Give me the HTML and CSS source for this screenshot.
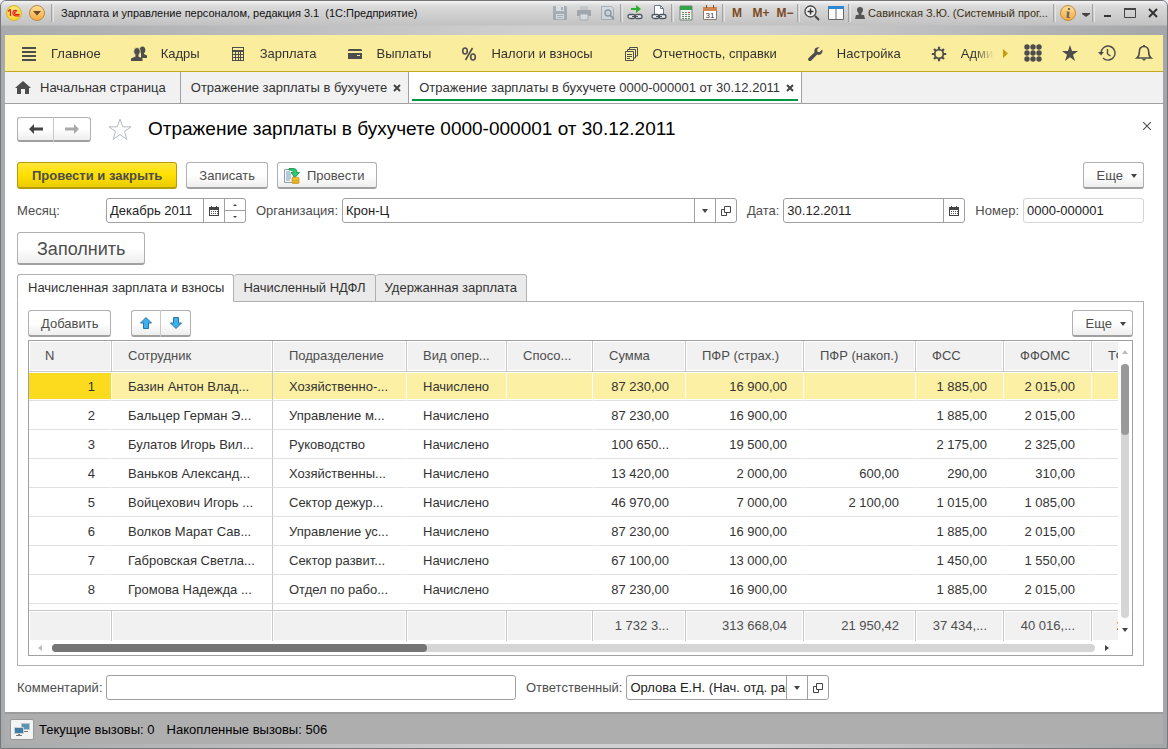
FILE: index.html
```html
<!DOCTYPE html>
<html lang="ru">
<head>
    <meta charset="UTF-8">
    <meta name="viewport" content="width=device-width, initial-scale=1.0">
    <title>Зарплата и управление персоналом</title>
    <link rel="stylesheet" href="styles.css">
</head>
<body>
    <!-- Shared icons -->
    <svg class="sprite" aria-hidden="true">
        <symbol id="i-calendar" viewBox="0 0 10 10">
            <path d="M0 1h10v9H0z" fill="#444"/>
            <path d="M1 4h8v5H1z" fill="#fff"/>
            <path d="M2 0h1v2H2zM7 0h1v2H7z" fill="#444"/>
            <path d="M2 5h1v1H2zM4 5h1v1H4zM6 5h1v1H6zM2 7h1v1H2zM4 7h1v1H4zM6 7h1v1H6zM8 5h1v1H8zM8 7h1v1H8z" fill="#555"/>
        </symbol>
        <symbol id="i-open" viewBox="0 0 10 10">
            <path d="M3.500 .5h6v6h-6zM3 3.500H.5v6h5V7" fill="none" stroke="#444"/>
        </symbol>
        <symbol id="i-down" viewBox="0 0 6 4"><path d="M0 0h6L3 4z" fill="#444"/></symbol>
        <symbol id="i-close" viewBox="0 0 8 8"><path d="M1 1l6 6M7 1L1 7" stroke="#444" stroke-width="2"/></symbol>
    </svg>

    <div class="window">
        <header class="titlebar">
            <svg class="logo" viewBox="0 0 16 16">
                <defs>
                    <radialGradient id="g-logo" cx=".5" cy=".4" r=".6"><stop offset="0" stop-color="#fff7a0"/><stop offset="1" stop-color="#f8cf1c"/></radialGradient>
                    <linearGradient id="g-orange" x2="0" y2="1"><stop offset="0" stop-color="#ffdf9c"/><stop offset="1" stop-color="#f6a93a"/></linearGradient>
                </defs>
                <circle cx="8" cy="8" r="7.500" fill="url(#g-logo)" stroke="#d8b43c"/>
                <path d="M2 6.500L3.700 5h.8v6M11 6.300C10 4.800 6.800 5 6.800 8s2.500 3.200 6.700 2.800M10.200 7.200c-1-.7-1.700-.1-1.700.8s.6 1.300 1.500 1.300h3.500" fill="none" stroke="#e3201b" stroke-width="1.300"/>
            </svg>
            <button class="main-menu" aria-label="Меню">
                <svg viewBox="0 0 16 16"><circle cx="8" cy="8" r="7.500" fill="url(#g-orange)" stroke="#b98a45"/><path d="M4 6h8l-4 4.500z" fill="#6b4a2a"/></svg>
            </button>
            <span class="sep"></span>
            <span class="caption">Зарплата и управление персоналом, редакция 3.1&nbsp; (1С:Предприятие)</span>

            <div class="tools">
                <button class="tool disabled" aria-label="Сохранить"><svg viewBox="0 0 16 16"><path d="M1 1h13l1 1v13H1z" fill="#8796a3"/><path d="M4 1h8v5H4zM4 9h8v5H4z" fill="#dfe3e6"/><path d="M5 10h6v1H5zM5 12h6v1H5zM9 2h2v3H9z" fill="#8796a3"/></svg></button>
                <button class="tool disabled" aria-label="Печать"><svg viewBox="0 0 16 16"><path d="M4 1h8v5H4z" fill="#b5bcc2"/><path d="M1 5h14v6H1z" fill="#7f8a93"/><path d="M4 9h8v6H4z" fill="#dfe3e6" stroke="#8796a3"/></svg></button>
                <button class="tool disabled" aria-label="Просмотр"><svg viewBox="0 0 16 16"><path d="M1.500 1.500h10l2 2v11h-12z" fill="#d7dce0" stroke="#8796a3"/><circle cx="8" cy="8" r="3" fill="#c2d3df" stroke="#637787" stroke-width="1.500"/><path d="M10 10l4 4" stroke="#637787" stroke-width="2"/></svg></button>
                <span class="sep"></span>
                <button class="tool" aria-label="Получить ссылку"><svg viewBox="0 0 16 16"><path d="M4 3h5V0l5 4-5 4V5H4z" fill="#2fae2f"/><rect x="1" y="9.500" width="7" height="4" rx="2" fill="#eee" stroke="#4d5660" stroke-width="1.300"/><rect x="8" y="9.500" width="7" height="4" rx="2" fill="#eee" stroke="#4d5660" stroke-width="1.300"/><path d="M5 11.500h6" stroke="#4d5660"/></svg></button>
                <button class="tool" aria-label="Перейти по ссылке"><svg viewBox="0 0 16 16"><path d="M3.500 9V.5h6l3 3V9" fill="#fff" stroke="#6c7c8c"/><path d="M9.500.5v3h3" fill="none" stroke="#6c7c8c"/><rect x="1" y="9.500" width="7" height="4" rx="2" fill="#eee" stroke="#4d5660" stroke-width="1.300"/><rect x="8" y="9.500" width="7" height="4" rx="2" fill="#eee" stroke="#4d5660" stroke-width="1.300"/><path d="M5 11.500h6" stroke="#4d5660"/></svg></button>
                <span class="sep"></span>
                <button class="tool" aria-label="Калькулятор"><svg viewBox="0 0 16 16"><path d="M2 1h12v14H2z" fill="#f4f4f4" stroke="#6d8574"/><path d="M2 1h12v4H2z" fill="#37a24b"/><path d="M4 7h2v1H4zM7 7h2v1H7zM4 9h2v1H4zM7 9h2v1H7zM4 11h2v1H4zM7 11h2v1H7zM4 13h2v1H4zM7 13h2v1H7zM10 9h2v1h-2zM10 11h2v1h-2zM10 13h2v1h-2z" fill="#5f8a68"/><path d="M10 7h2v1h-2z" fill="#d33"/></svg></button>
                <button class="tool" aria-label="Календарь"><svg viewBox="0 0 16 16"><path d="M1.500 2.500h13v12h-13z" fill="#fff" stroke="#8a7a70"/><path d="M1 2h14v4H1z" fill="#d0864c"/><path d="M4 0h1v3H4zM11 0h1v3h-1z" fill="#7a4f2d"/><text x="8" y="13" class="cal-day">31</text></svg></button>
                <span class="sep"></span>
                <button class="tool mem">M</button>
                <button class="tool mem">M+</button>
                <button class="tool mem">M−</button>
                <span class="sep"></span>
                <button class="tool" aria-label="Масштаб"><svg viewBox="0 0 16 16"><circle cx="6.500" cy="6.500" r="5.500" fill="#f2f2f2" stroke="#444" stroke-width="1.300"/><path d="M3.500 6.500h6M6.500 3.500v6" stroke="#333" stroke-width="1.500"/><path d="M11 11l4 4" stroke="#444" stroke-width="2"/></svg></button>
                <button class="tool" aria-label="Панели"><svg viewBox="0 0 16 16"><path d="M.5 1.500h15v13H.5z" fill="#fff" stroke="#666"/><path d="M0 1h16v3H0z" fill="#2f86d2"/><path d="M8 4v11" stroke="#666"/></svg></button>
                <span class="sep"></span>
                <button class="user"><svg viewBox="0 0 10 12"><circle cx="5" cy="3" r="3" fill="#555"/><path d="M3.500 5h3v3H9l1 4H0l1-4h2.500z" fill="#555"/></svg>Савинская З.Ю. (Системный прог...</button>
                <span class="sep"></span>
                <button class="tool" aria-label="О программе"><svg viewBox="0 0 16 16"><circle cx="8" cy="8" r="7.500" fill="url(#g-orange)" stroke="#c28d3d"/><path d="M8 3h2v2H8zM6.500 6.500h3L9 12h1v1H6.500l.5-5.500h-.8z" fill="#6a6a6a"/></svg></button>
                <button class="tool narrow" aria-label="Еще"><svg viewBox="0 0 16 16"><path d="M4 8h8v1l-4 3-4-3z" fill="#444"/></svg></button>
                <span class="sep"></span>
                <button class="tool win" aria-label="Свернуть"><svg viewBox="0 0 16 16"><path d="M5 10h7v2H5z" fill="#333"/></svg></button>
                <button class="tool win" aria-label="Развернуть"><svg viewBox="0 0 16 16"><path d="M2.500 3.500h11v9h-11z" fill="none" stroke="#444"/><path d="M2 3h12v2H2z" fill="#444"/></svg></button>
                <button class="tool win" aria-label="Закрыть"><svg viewBox="0 0 16 16"><path d="M4 4l8 8M12 4l-8 8" stroke="#333" stroke-width="2"/></svg></button>
            </div>
        </header>

        <div class="app">
            <nav class="sections">
                <div class="section-list">
                    <a href="#"><svg viewBox="0 0 16 16"><path d="M1 1h14v2H1zM1 5h14v2H1zM1 9h14v2H1zM1 13h14v2H1z"/></svg>Главное</a>
                    <a href="#"><svg viewBox="0 0 16 16"><ellipse cx="11.500" cy="4" rx="2.800" ry="3.500"/><path d="M10 6h3v2l3 1.500V12h-6z"/><ellipse cx="6" cy="5.500" rx="3.300" ry="4" stroke="#fbed9e" stroke-width=".8"/><path d="M4.500 8.500h3v2l4 2V15H0v-2.500l4.500-2z"/></svg>Кадры</a>
                    <a href="#"><svg viewBox="0 0 16 16"><path fill-rule="evenodd" d="M2 1h12v14H2zM3 2v2h10V2zM3 6v2h2V6zM6 6v2h2V6zM9 6v2h1V6zM11 6v2h2V6zM3 9v2h2V9zM6 9v2h2V9zM9 9v2h1V9zM11 9v2h2V9zM3 12v2h2v-2zM6 12v2h2v-2zM9 12v2h1v-2zM11 12v2h2v-2z"/></svg>Зарплата</a>
                    <a href="#"><svg viewBox="0 0 16 16"><path fill-rule="evenodd" d="M2 3h12l1 1v1H1V4zM1 7h14v6H1zM10 9v1h3V9z"/></svg>Выплаты</a>
                    <a href="#"><svg viewBox="0 0 16 16"><g fill="none" stroke="#4d4d4d" stroke-width="1.600"><ellipse cx="4" cy="5" rx="2.300" ry="3"/><ellipse cx="12" cy="11" rx="2.300" ry="3"/><path d="M11.500 2l-7 12"/></g></svg>Налоги и взносы</a>
                    <a href="#"><svg viewBox="0 0 16 16"><path d="M2.500 5.500h8v9h-8zM4.500 5V3.500h8V12H11M6.500 3V1.500h8V10H13M4 8.500h5M4 10.500h5M4 12.500h3" fill="none" stroke="#4d4d4d"/></svg>Отчетность, справки</a>
                    <a href="#"><svg viewBox="0 0 16 16"><path d="M12.500 1.300L10 3.800l.5 2 2 .5 2.700-2.700c.8 2-.1 4.200-1.700 4.900-1.200.6-2.300.5-3.300.1L4.300 14.500c-.8.8-2 .8-2.700.1s-.8-1.900 0-2.700L7.600 6.200c-.7-2.300.2-5.500 4.900-4.900z"/></svg>Настройка</a>
                    <a href="#"><svg viewBox="0 0 16 16"><circle cx="8" cy="8" r="4.300" fill="none" stroke="#4d4d4d" stroke-width="1.800"/><path d="M8 .8v3M8 12.200v3M.8 8h3M12.200 8h3M3 3l2 2M11 11l2 2M3 13l2-2M11 5l2-2" stroke="#4d4d4d" stroke-width="2.200"/></svg>Администрирование</a>
                </div>
                <button class="more-sections" aria-label="Далее"><svg viewBox="0 0 5 9"><path d="M0 0l5 4.500L0 9z" fill="#c79b10"/></svg></button>
                <div class="nav-tools">
                    <button aria-label="Все функции"><svg viewBox="0 0 18 18"><g fill="#4d4d4d"><circle cx="3" cy="3" r="2.700"/><circle cx="9" cy="3" r="2.700"/><circle cx="15" cy="3" r="2.700"/><circle cx="3" cy="9" r="2.700"/><circle cx="9" cy="9" r="2.700"/><circle cx="15" cy="9" r="2.700"/><circle cx="3" cy="15" r="2.700"/><circle cx="9" cy="15" r="2.700"/><circle cx="15" cy="15" r="2.700"/></g></svg></button>
                    <button aria-label="Избранное"><svg viewBox="0 0 18 18"><path d="M9 1l2 6h6l-5 3.700 2 6.300-5-3.800L4 17l2-6.300L1 7h6z" fill="#4d4d4d"/></svg></button>
                    <button aria-label="История"><svg viewBox="0 0 18 18"><path d="M3 9.500a7 7 0 1 1 2 4.500" fill="none" stroke="#4d4d4d" stroke-width="1.400"/><path d="M0 8h6l-3 3.500z" fill="#4d4d4d"/><path d="M9.500 5v5l3 2" fill="none" stroke="#4d4d4d" stroke-width="1.400"/></svg></button>
                    <button aria-label="Уведомления"><svg viewBox="0 0 18 18"><path d="M2 14h14c-2-1.500-2.300-3-2.300-6 0-3.500-1.700-5.500-4.700-5.500S4.300 4.500 4.300 8c0 3-.3 4.500-2.300 6z" fill="none" stroke="#4d4d4d" stroke-width="1.600"/><path d="M8 1h2v2H8zM7 15h4l-2 2z" fill="#4d4d4d"/></svg></button>
                </div>
            </nav>

            <div class="open-tabs">
                <a href="#" class="open-tab home"><svg viewBox="0 0 16 16"><path d="M8 1l8 7h-2v6h-4v-5H6v5H2V8H0z" fill="#4d4d4d"/></svg>Начальная страница</a>
                <a href="#" class="open-tab">Отражение зарплаты в бухучете<svg class="x"><use href="#i-close"/></svg></a>
                <a href="#" class="open-tab current">Отражение зарплаты в бухучете 0000-000001 от 30.12.2011<svg class="x"><use href="#i-close"/></svg></a>
            </div>

            <main class="form">
                <div class="heading">
                    <div class="btn-group">
                        <button class="btn" aria-label="Назад"><svg class="arrow" viewBox="0 0 14 10"><path d="M0 5l5-5v3.500h9v3H5V10z" fill="#444"/></svg></button>
                        <button class="btn" aria-label="Вперед"><svg class="arrow" viewBox="0 0 14 10"><path d="M14 5L9 0v3.500H0v3h9V10z" fill="#aaa"/></svg></button>
                    </div>
                    <svg class="favorite" viewBox="0 0 24 22"><path d="M12 1l2.700 7.800H23l-6.600 4.800 2.500 7.700L12 16.500l-6.900 4.800 2.500-7.700L1 8.800h8.300z" fill="none" stroke="#b3b8c0"/></svg>
                    <h1>Отражение зарплаты в бухучете 0000-000001 от 30.12.2011</h1>
                    <button class="close-form" aria-label="Закрыть"><svg viewBox="0 0 8 8"><path d="M0 0l8 8M8 0L0 8" stroke="#555" stroke-width="1.200"/></svg></button>
                </div>

                <div class="commands">
                    <button class="btn primary">Провести и закрыть</button>
                    <button class="btn">Записать</button>
                    <button class="btn with-icon"><svg viewBox="0 0 16 16"><path d="M.5 1.500h9v13h-9z" fill="#f4f8fb" stroke="#8ba0b5"/><path d="M2 4h4M2 6h5M2 8h5M2 10h5M2 12h4" stroke="#7d9cb8"/><path d="M5 .5h4c3 0 4 1.500 4 4h2.500L11 9.500 7 4.500h2.500C9.500 3 8 2 5 2z" fill="#2ecc71" stroke="#128a45" stroke-width=".8"/><path d="M8 10c0-1 7-1 7 0v5c0 1-7 1-7 0z" fill="#f3c432" stroke="#c48f14" stroke-width=".7"/><path d="M8 12c1 1 6 1 7 0M8 14c1 1 6 1 7 0" fill="none" stroke="#c48f14" stroke-width=".7"/></svg>Провести</button>
                    <button class="btn more">Еще<svg class="down"><use href="#i-down"/></svg></button>
                </div>

                <div class="fields">
                    <label class="first" for="month">Месяц:</label>
                    <div class="field month">
                        <input id="month" value="Декабрь 2011">
                        <button aria-label="Выбрать"><svg class="glyph"><use href="#i-calendar"/></svg></button>
                        <div class="spin">
                            <button aria-label="Больше"><svg viewBox="0 0 4 2"><path d="M0 2l2-2 2 2z" fill="#444"/></svg></button>
                            <button aria-label="Меньше"><svg viewBox="0 0 4 2"><path d="M0 0l2 2 2-2z" fill="#444"/></svg></button>
                        </div>
                    </div>
                    <label for="org">Организация:</label>
                    <div class="field org">
                        <input id="org" value="Крон-Ц">
                        <button aria-label="Список"><svg class="down"><use href="#i-down"/></svg></button>
                        <button aria-label="Открыть"><svg class="glyph"><use href="#i-open"/></svg></button>
                    </div>
                    <label for="date">Дата:</label>
                    <div class="field date">
                        <input id="date" value="30.12.2011">
                        <button aria-label="Выбрать"><svg class="glyph"><use href="#i-calendar"/></svg></button>
                    </div>
                    <label for="number">Номер:</label>
                    <div class="field number"><input id="number" value="0000-000001" readonly></div>
                </div>

                <button class="btn fill">Заполнить</button>

                <div class="page-tabs">
                    <button class="current">Начисленная зарплата и взносы</button>
                    <button>Начисленный НДФЛ</button>
                    <button>Удержанная зарплата</button>
                </div>

                <section class="page">
                    <div class="page-commands">
                        <button class="btn">Добавить</button>
                        <div class="btn-group">
                            <button class="btn" aria-label="Вверх"><svg class="move" viewBox="0 0 12 12"><path d="M6 .5L11.500 6H8.500v5.500h-5V6H.5z" fill="#3fb0ee" stroke="#2775a8"/></svg></button>
                            <button class="btn" aria-label="Вниз"><svg class="move" viewBox="0 0 12 12"><path d="M6 11.500L.5 6h3V.5h5V6h3z" fill="#3fb0ee" stroke="#2775a8"/></svg></button>
                        </div>
                        <button class="btn more">Еще<svg class="down"><use href="#i-down"/></svg></button>
                    </div>

                    <div class="grid">
                        <div class="grid-body">
                            <div class="grid-view">
                                <table>
                                    <colgroup>
                                        <col class="c-n"><col class="c-name"><col class="c-dept"><col class="c-kind"><col class="c-way"><col class="c-sum">
                                        <col class="c-pfr"><col class="c-pfr2"><col class="c-fss"><col class="c-fss"><col class="c-tfoms">
                                    </colgroup>
                                    <thead>
                                        <tr><th>N</th><th>Сотрудник</th><th>Подразделение</th><th>Вид опер...</th><th>Спосо...</th><th>Сумма</th><th>ПФР (страх.)</th><th>ПФР (накоп.)</th><th>ФСС</th><th>ФФОМС</th><th>ТФОМС</th></tr>
                                    </thead>
                                    <tbody>
                                        <tr class="selected"><td>1</td><td>Базин Антон Влад...</td><td>Хозяйственно-...</td><td>Начислено</td><td></td><td>87 230,00</td><td>16 900,00</td><td></td><td>1 885,00</td><td>2 015,00</td><td></td></tr>
                                        <tr><td>2</td><td>Бальцер Герман Э...</td><td>Управление м...</td><td>Начислено</td><td></td><td>87 230,00</td><td>16 900,00</td><td></td><td>1 885,00</td><td>2 015,00</td><td></td></tr>
                                        <tr><td>3</td><td>Булатов Игорь Вил...</td><td>Руководство</td><td>Начислено</td><td></td><td>100 650...</td><td>19 500,00</td><td></td><td>2 175,00</td><td>2 325,00</td><td></td></tr>
                                        <tr><td>4</td><td>Ваньков Александ...</td><td>Хозяйственны...</td><td>Начислено</td><td></td><td>13 420,00</td><td>2 000,00</td><td>600,00</td><td>290,00</td><td>310,00</td><td></td></tr>
                                        <tr><td>5</td><td>Войцехович Игорь ...</td><td>Сектор дежур...</td><td>Начислено</td><td></td><td>46 970,00</td><td>7 000,00</td><td>2 100,00</td><td>1 015,00</td><td>1 085,00</td><td></td></tr>
                                        <tr><td>6</td><td>Волков Марат Сав...</td><td>Управление ус...</td><td>Начислено</td><td></td><td>87 230,00</td><td>16 900,00</td><td></td><td>1 885,00</td><td>2 015,00</td><td></td></tr>
                                        <tr><td>7</td><td>Габровская Светла...</td><td>Сектор развит...</td><td>Начислено</td><td></td><td>67 100,00</td><td>13 000,00</td><td></td><td>1 450,00</td><td>1 550,00</td><td></td></tr>
                                        <tr><td>8</td><td>Громова Надежда ...</td><td>Отдел по рабо...</td><td>Начислено</td><td></td><td>87 230,00</td><td>16 900,00</td><td></td><td>1 885,00</td><td>2 015,00</td><td></td></tr>
                                        <tr class="rest"><td></td><td></td><td></td><td></td><td></td><td></td><td></td><td></td><td></td><td></td><td></td></tr>
                                    </tbody>
                                    <tfoot>
                                        <tr><td></td><td></td><td></td><td></td><td></td><td>1 732 3...</td><td>313 668,04</td><td>21 950,42</td><td>37 434,...</td><td>40 016,...</td><td>2 170,00</td></tr>
                                    </tfoot>
                                </table>
                            </div>
                            <div class="vscroll">
                                <svg class="tip off" viewBox="0 0 6 4"><path d="M0 4h6L3 0z"/></svg>
                                <div class="track"><div class="thumb"></div></div>
                                <svg class="tip" viewBox="0 0 6 4"><path d="M0 0h6L3 4z"/></svg>
                            </div>
                        </div>
                        <div class="hscroll">
                            <svg class="tip off" viewBox="0 0 4 6"><path d="M4 0v6L0 3z"/></svg>
                            <div class="track"><div class="thumb"></div></div>
                            <svg class="tip" viewBox="0 0 4 6"><path d="M0 0v6l4-3z"/></svg>
                        </div>
                    </div>
                </section>

                <div class="fields footer-fields">
                    <label class="first" for="comment">Комментарий:</label>
                    <div class="field comment"><input id="comment"></div>
                    <label for="person">Ответственный:</label>
                    <div class="field person">
                        <input id="person" value="Орлова Е.Н. (Нач. отд. расчетов)">
                        <button aria-label="Список"><svg class="down"><use href="#i-down"/></svg></button>
                        <button aria-label="Открыть"><svg class="glyph"><use href="#i-open"/></svg></button>
                    </div>
                </div>
            </main>

            <footer class="status">
                <button aria-label="Показатели"><svg viewBox="0 0 16 16"><path d="M7.500 1.500h8v6h-8z" fill="#5e93b8" stroke="#b9c2c9"/><path d="M9 9h5v1H9z" fill="#777"/><path d="M.5 5.500h9v6h-9z" fill="#3f7ca6" stroke="#c9d0d5"/><path d="M4 12h2v1h2v1H2v-1h2z" fill="#777"/></svg></button>
                <span>Текущие вызовы: 0</span>
                <span>Накопленные вызовы: 506</span>
            </footer>
        </div>
    </div>
</body>
</html>
```
FILE: styles.css
```css
* {
    box-sizing: border-box;
}

body {
    margin: 0;
    font-family: "Liberation Sans", Arial, sans-serif;
    font-size: 13px;
    line-height: 16px;
    color: #333;
    background-color: #e8eef4;
}

button,
input {
    font: inherit;
    color: inherit;
    margin: 0;
    padding: 0;
    border: none;
    background: none;
}

a {
    color: inherit;
    text-decoration: none;
}

svg {
    display: block;
    flex: none;
}

.sprite {
    position: absolute;
    width: 0;
    height: 0;
}

/* Window frame */
.window {
    display: flex;
    flex-direction: column;
    min-height: 100vh;
    padding: 0 4px 4px;
    border: 1px solid #77777a;
    border-radius: 6px 6px 0 0;
    background: linear-gradient(90deg, #a9aaad, #cfcfcf 45%, #cfcfcf 65%, #a5a6a9);
}

.titlebar {
    display: flex;
    align-items: center;
    height: 34px;
    padding-bottom: 10px;
    margin: 0 -4px;
    border-radius: 5px 5px 0 0;
    background: linear-gradient(#f4f4f4, #dadada 5px, #c2c2c3 24px, transparent 25px);
    color: #222;
    font-size: 11px;
}

.logo {
    width: 16px;
    height: 16px;
    margin-left: 5px;
}

.main-menu {
    margin: 0 6px 0 7px;
}

.main-menu svg {
    width: 16px;
    height: 16px;
}

.sep {
    flex: none;
    width: 3px;
    height: 18px;
    border-left: 1px solid #a2a2a2;
    border-right: 1px solid #e4e4e4;
}

.caption {
    margin-left: 7px;
    color: #111;
    white-space: nowrap;
}

.tools {
    display: flex;
    align-items: center;
    margin-left: auto;
    padding-right: 3px;
}

.tool {
    display: flex;
    align-items: center;
    justify-content: center;
    width: 24px;
    height: 24px;
}

.tool svg {
    width: 16px;
    height: 16px;
}

.tool.disabled {
    opacity: 0.6;
}

.tool.narrow {
    width: 12px;
}

.tool.win {
    width: 23px;
}

.tool.mem {
    font-size: 12px;
    font-weight: bold;
    color: #7c4a1e;
}

.cal-day {
    font-size: 8px;
    text-anchor: middle;
    fill: #333;
}

.user {
    display: flex;
    align-items: center;
    gap: 3px;
    width: 202px;
    padding-left: 4px;
    color: #3b3010;
    white-space: nowrap;
}

.user svg {
    width: 10px;
    height: 12px;
}

/* Application area */
.app {
    display: flex;
    flex-direction: column;
    flex: 1;
    background-color: #fff;
}

.sections {
    display: flex;
    align-items: center;
    height: 37px;
    padding-left: 16px;
    background-color: #fbed9e;
    border-bottom: 1px solid #c2a81e;
}

.section-list {
    display: flex;
    flex: 1;
    gap: 30px;
    min-width: 0;
    padding-top: 1px;
    overflow: hidden;
    white-space: nowrap;
    -webkit-mask-image: linear-gradient(90deg, #000 calc(100% - 20px), transparent);
    mask-image: linear-gradient(90deg, #000 calc(100% - 20px), transparent);
}

.section-list a {
    display: flex;
    align-items: center;
    gap: 14px;
}

.section-list svg {
    width: 16px;
    height: 16px;
    fill: #4d4d4d;
}

.more-sections {
    margin: 0 16px 0 9px;
}

.more-sections svg {
    width: 5px;
    height: 9px;
}

.nav-tools {
    display: flex;
    gap: 19px;
    padding-right: 10px;
}

.nav-tools svg {
    width: 18px;
    height: 18px;
}

.open-tabs {
    display: flex;
    height: 32px;
    background-color: #f1f1f1;
    border-bottom: 1px solid #a0a0a0;
}

.open-tab {
    position: relative;
    display: flex;
    align-items: center;
    padding: 0 7px 0 10px;
    gap: 6px;
    border-right: 1px solid #a0a0a0;
    white-space: nowrap;
}

.open-tab.home {
    gap: 9px;
    padding-right: 14px;
}

.open-tab svg {
    width: 16px;
    height: 16px;
}

.open-tab .x {
    width: 8px;
    height: 8px;
}

.open-tab.current {
    background-color: #fff;
}

.open-tab.current::after {
    content: "";
    position: absolute;
    left: 3px;
    right: 3px;
    bottom: 2px;
    height: 2px;
    background-color: #009646;
}

/* Form */
.form {
    flex: 1;
    padding: 12px 19px 12px 12px;
}

.heading {
    display: flex;
    align-items: center;
    height: 26px;
    margin-bottom: 20px;
}

.heading h1 {
    margin: 0;
    font-size: 19px;
    line-height: 24px;
    font-weight: normal;
    color: #000;
    white-space: nowrap;
}

.favorite {
    width: 24px;
    height: 22px;
    margin: 0 16px 0 17px;
}

.close-form {
    margin: 0 -7px 6px auto;
}

.close-form svg {
    width: 8px;
    height: 8px;
}

.btn {
    display: flex;
    align-items: center;
    justify-content: center;
    height: 27px;
    padding: 1px 12px 0;
    border: 1px solid #b0b0b0;
    border-bottom: 2px solid #a0a0a0;
    border-radius: 3px;
    background: linear-gradient(#fff 50%, #eee);
    color: #4d4d4d;
    white-space: nowrap;
}

.btn.primary {
    padding: 1px 14px 0;
    border-color: #b59c0c;
    background: linear-gradient(#ffe63a, #ffe000 50%, #eccb00);
    font-weight: bold;
}

.btn.with-icon {
    gap: 7px;
    padding-left: 6px;
}

.btn.with-icon svg {
    width: 16px;
    height: 16px;
}

.btn.more {
    gap: 8px;
    padding: 1px 6px 0 13px;
    margin-left: auto;
}

.btn.fill {
    height: 33px;
    padding: 1px 19px 0;
    font-size: 18px;
}

.btn-group {
    display: flex;
}

.btn-group .btn {
    height: inherit;
}

.btn-group .btn:first-child {
    border-right-color: #c8c8c8;
    border-radius: 3px 0 0 3px;
}

.btn-group .btn:last-child {
    border-left: none;
    border-radius: 0 3px 3px 0;
}

.heading .btn-group {
    height: 25px;
}

.heading .btn {
    width: 37px;
    padding: 0;
}

.arrow {
    width: 14px;
    height: 10px;
}

.down {
    width: 6px;
    height: 4px;
}

.commands {
    display: flex;
    gap: 9px;
    margin-bottom: 9px;
}

.fields {
    display: flex;
    align-items: center;
    margin-bottom: 9px;
    color: #4d4d4d;
}

.fields label {
    margin: 0 4px 0 10px;
    white-space: nowrap;
}

.fields .first {
    width: 85px;
    margin-left: 0;
}

.field {
    display: flex;
    height: 25px;
    border: 1px solid #a0a0a0;
    border-radius: 3px;
    background-color: #fff;
    color: #222;
}

.field input {
    flex: 1;
    min-width: 0;
    padding: 0 0 0 3px;
    outline: none;
}

.field button {
    display: flex;
    align-items: center;
    justify-content: center;
    width: 21px;
    border-left: 1px solid #a0a0a0;
}

.glyph {
    width: 10px;
    height: 10px;
}

.spin {
    display: flex;
    flex-direction: column;
}

.spin button {
    flex: 1;
}

.spin button + button {
    border-top: 1px solid #a0a0a0;
}

.spin svg {
    width: 4px;
    height: 2px;
}

.field.month {
    width: 140px;
}

.field.org {
    flex: 1;
}

.field.date {
    width: 182px;
}

.field.number {
    width: 121px;
    border-color: #d5d5d5;
}

.field.comment {
    width: 410px;
}

.field.person {
    width: 203px;
}

/* Pages of the document */
.page-tabs {
    position: relative;
    display: flex;
    margin-top: 9px;
    margin-bottom: -1px;
}

.page-tabs button {
    height: 28px;
    padding: 0 9px;
    border: 1px solid #b0b0b0;
    border-left: none;
    border-radius: 3px 3px 0 0;
    background-color: #eaeaea;
    white-space: nowrap;
}

.page-tabs .current {
    padding-left: 10px;
    border-left: 1px solid #b0b0b0;
    border-bottom-color: #fff;
    background-color: #fff;
}

.page {
    padding: 8px 10px 9px;
    border: 1px solid #b0b0b0;
}

.page-commands {
    display: flex;
    gap: 20px;
    margin-bottom: 3px;
}

.page-commands .btn-group .btn {
    width: 30px;
    padding: 0;
}

.move {
    width: 12px;
    height: 12px;
}

.grid {
    border: 1px solid #a0a0a0;
}

.grid-body {
    display: flex;
}

.grid-view {
    flex: 1;
    min-width: 0;
    overflow: hidden;
}

.grid table {
    width: 1155px;
    table-layout: fixed;
    border-collapse: separate;
    border-spacing: 0;
}

.c-n { width: 83px; }
.c-name { width: 161px; }
.c-dept { width: 134px; }
.c-kind { width: 100px; }
.c-way { width: 86px; }
.c-sum { width: 93px; }
.c-pfr { width: 118px; }
.c-pfr2 { width: 112px; }
.c-fss { width: 88px; }
.c-tfoms { width: 92px; }

.grid th,
.grid td {
    overflow: hidden;
    padding: 0 16px;
    text-align: left;
    font-weight: normal;
    white-space: nowrap;
}

.grid th,
.grid tfoot td {
    height: 31px;
    border-right: 1px solid #c8c8c8;
    background-color: #f1f1f1;
    box-shadow: inset 0 0 0 1px #fff;
    color: #4d4d4d;
}

.grid th {
    border-bottom: 1px solid #c8c8c8;
}

.grid tfoot td {
    border-top: 1px solid #c8c8c8;
}

.grid tbody td {
    height: 29px;
    padding-top: 2px;
    border-right: 1px solid #fff;
    border-bottom: 1px solid #e2e2e2;
}

.grid tbody td:nth-child(2) {
    border-right-color: #c8c8c8;
}

.grid td:first-child,
.grid td:nth-child(n+6) {
    text-align: right;
}

.grid .selected td {
    background-color: #fcf0a4;
    box-shadow: inset 0 1px #fff, inset 0 -1px #fff;
}

.grid .selected td:first-child {
    background-color: #fcdb1f;
}

.grid .rest td {
    height: 6px;
    border-bottom: none;
}

/* Scroll bars of the table */
.vscroll {
    display: flex;
    flex-direction: column;
    align-items: center;
    width: 14px;
    padding: 8px 0;
}

.vscroll .track {
    flex: 1;
    width: 8px;
    margin: 9px 0;
}

.vscroll .thumb {
    width: 8px;
    height: 28%;
    background-color: #999;
}

.hscroll {
    display: flex;
    align-items: center;
    height: 14px;
    padding: 0 22px 0 8px;
}

.hscroll .track {
    flex: 1;
    height: 8px;
    margin: 0 9px;
}

.hscroll .thumb {
    width: 36%;
    height: 8px;
    background-color: #757575;
}

.track,
.thumb {
    border-radius: 4px;
    background-color: #d5d5d5;
}

.tip {
    width: 6px;
    height: 6px;
    fill: #444;
}

.tip.off {
    fill: #bbb;
}

.footer-fields {
    margin: 9px 0 0;
}

/* Status bar */
.status {
    display: flex;
    align-items: center;
    gap: 12px;
    height: 32px;
    padding: 1px 0 0 5px;
    border-top: 2px solid #9c9c9c;
    background-color: #aeaeae;
    color: #000;
}

.status button {
    display: flex;
    align-items: center;
    justify-content: center;
    width: 24px;
    height: 21px;
    margin-right: -7px;
    border: 1px solid #999;
    border-radius: 2px;
    background-color: #f4f4f4;
}

.status svg {
    width: 16px;
    height: 16px;
}
```
